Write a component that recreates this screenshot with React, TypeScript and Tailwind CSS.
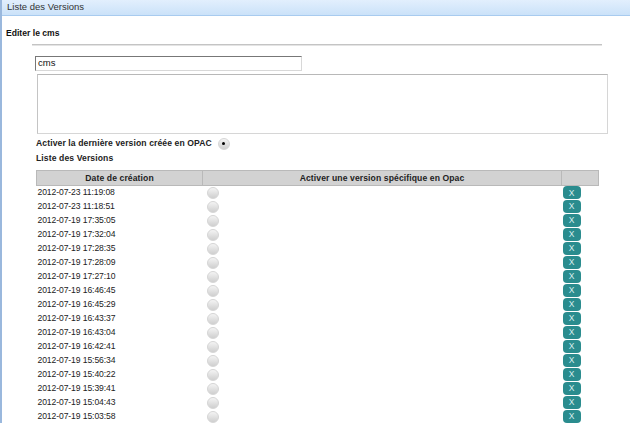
import React from "react";

const rows = [
  "2012-07-23 11:19:08",
  "2012-07-23 11:18:51",
  "2012-07-19 17:35:05",
  "2012-07-19 17:32:04",
  "2012-07-19 17:28:35",
  "2012-07-19 17:28:09",
  "2012-07-19 17:27:10",
  "2012-07-19 16:46:45",
  "2012-07-19 16:45:29",
  "2012-07-19 16:43:37",
  "2012-07-19 16:43:04",
  "2012-07-19 16:42:41",
  "2012-07-19 15:56:34",
  "2012-07-19 15:40:22",
  "2012-07-19 15:39:41",
  "2012-07-19 15:04:43",
  "2012-07-19 15:03:58",
];

function Radio({ checked }: { checked?: boolean }) {
  return (
    <span className="inline-flex h-[12px] w-[12px] items-center justify-center rounded-full border border-[#d6d6d6] bg-gradient-to-b from-[#f4f4f4] to-[#cfcfcf]">
      {checked ? <span className="h-[3px] w-[3px] rounded-full bg-black" /> : null}
    </span>
  );
}

export default function App() {
  return (
    <div
      className="h-[423px] w-[630px] overflow-hidden bg-white border-l-2 border-[#9ab8dd] text-[#111]"
      style={{ fontFamily: '"Liberation Sans", Arial, sans-serif' }}
    >
      <div className="flex h-[16px] items-center border-b border-[#a8cbef] bg-gradient-to-b from-[#e2effd] to-[#cbe2f9] pl-[5px] text-[9.5px] text-[#333]">
        Liste des Versions
      </div>
      <div className="pl-[4px] pt-[11px] text-[8.6px] font-bold leading-[12px]">Editer le cms</div>
      <div className="ml-[30px] mt-[5px] h-[2px] w-[570px] border-t border-[#c4c4c4] bg-[#e4e4e4]" />
      <div className="ml-[33px] mt-[10px] flex h-[15px] w-[267px] items-center border border-[#d8d8d8] border-t-[#777] border-l-[#777] pl-[2px] text-[9.5px]">
        cms
      </div>
      <div className="ml-[35px] mt-[3px] h-[60px] w-[571px] border border-[#d6d6d6] border-t-[#b8b8b8] border-l-[#c4c4c4]" />
      <div className="ml-[34px] mt-[3px] flex h-[13px] items-center gap-[6px] text-[8.6px] font-bold tracking-[0.1px] text-[#222]">
        <span>Activer la dernière version créée en OPAC</span>
        <Radio checked />
      </div>
      <div className="ml-[34px] mt-[2px] h-[12px] text-[8.6px] font-bold leading-[12px] tracking-[0.1px] text-[#222]">Liste des Versions</div>
      <table className="ml-[34px] mt-[6px] w-[562px] table-fixed border-collapse text-[8.6px]">
        <colgroup>
          <col className="w-[166px]" />
          <col className="w-[359px]" />
          <col className="w-[37px]" />
        </colgroup>
        <thead>
          <tr className="h-[15px] bg-[#d2d2d2]">
            <th className="border border-[#b9b9b9] p-0 text-center font-bold tracking-[0.1px] text-[#222]">Date de création</th>
            <th className="border border-[#b9b9b9] p-0 text-center font-bold tracking-[0.1px] text-[#222]">Activer une version spécifique en Opac</th>
            <th className="border border-[#b9b9b9] p-0" />
          </tr>
        </thead>
        <tbody>
          {rows.map((d) => (
            <tr key={d} className="h-[14px]">
              <td className="p-0 pl-[1px] align-middle tracking-[-0.1px] text-[#222]">{d}</td>
              <td className="p-0 pl-[4px] align-middle leading-[0]">
                <Radio />
              </td>
              <td className="p-0 pl-[1px] align-middle leading-[0]">
                <span className="inline-flex h-[13px] w-[18px] items-center justify-center rounded-[4px] bg-[#2a8c8e] text-[8.5px] leading-none text-[#d8eeee]">
                  X
                </span>
              </td>
            </tr>
          ))}
        </tbody>
      </table>
    </div>
  );
}
